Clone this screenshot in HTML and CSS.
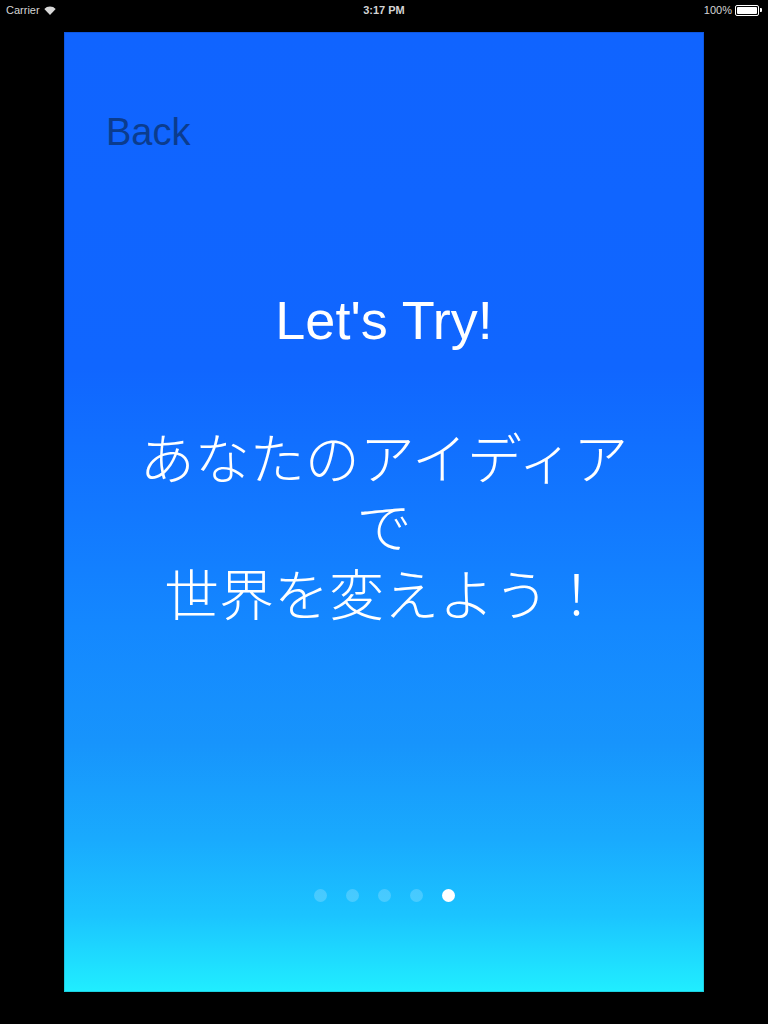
FILE: index.html
```
<!DOCTYPE html>
<html lang="ja">
<head>
<meta charset="utf-8">
<title>Let's Try</title>
<link rel="stylesheet" href="styles.css">
</head>
<body>
<div class="statusbar">
  <div class="sb-left">
    <span>Carrier</span>
    <svg class="wifi" width="12" height="9" viewBox="0 0 12 9">
      <path d="M6 9 L0.3 3 A8 8 0 0 1 11.7 3 Z" fill="#d8d8d8"/>
    </svg>
  </div>
  <div class="sb-center">3:17 PM</div>
  <div class="sb-right">
    <span>100%</span>
    <div class="battery"><div class="battery-fill"></div></div>
    <div class="battery-nub"></div>
  </div>
</div>
<main class="panel">
  <div class="back">Back</div>
  <div class="message">
    <div class="line latin">Let's Try!</div>
    <div class="line blank"></div>
    <div class="line jp">あなたのアイディア</div>
    <div class="line jp">で</div>
    <div class="line jp">世界を変えよう！</div>
  </div>
  <div class="dots">
    <span class="dot"></span>
    <span class="dot"></span>
    <span class="dot"></span>
    <span class="dot"></span>
    <span class="dot active"></span>
  </div>
</main>
</body>
</html>
```

FILE: styles.css
```
* { box-sizing: border-box; }
html, body { margin: 0; padding: 0; }
body {
  background: #000;
  width: 768px;
  height: 1024px;
  overflow: hidden;
  font-family: "Liberation Sans", "Noto Sans CJK JP", sans-serif;
}
.statusbar {
  height: 20px;
  display: flex;
  align-items: center;
  justify-content: space-between;
  padding: 0 6px 0 6px;
  color: #d4d4d4;
  font-size: 11px;
  position: relative;
}
.sb-left { display: flex; align-items: center; gap: 4px; }
.sb-center {
  position: absolute;
  left: 0; right: 0;
  text-align: center;
  font-weight: bold;
  pointer-events: none;
}
.sb-right { display: flex; align-items: center; gap: 3px; }
.battery {
  width: 24px;
  height: 11px;
  border: 1px solid #fff;
  border-radius: 2px;
  padding: 1px;
}
.battery-fill { width: 100%; height: 100%; background: #fff; border-radius: 1px; }
.battery-nub { width: 2px; height: 4px; background: #fff; margin-left: -2px; border-radius: 0 1px 1px 0; }
.panel {
  width: 640px;
  height: 960px;
  margin: 12px auto 0;
  display: flex;
  flex-direction: column;
  background: linear-gradient(to bottom,
    #1064ff 0%,
    #1066ff 35%,
    #1278ff 50%,
    #1488ff 62%,
    #1794fc 74%,
    #19aafe 84%,
    #1bc4ff 92%,
    #20eeff 100%);
  box-shadow: inset 0 0 0 1px rgba(0,0,0,0.12);
}
.back {
  margin: 78px 0 0 42px;
  font-size: 38px;
  line-height: 44px;
  color: #0b3c8e;
}
.message {
  margin-top: 132px;
  color: #fff;
  text-align: center;
}
.line {
  height: 68px;
  line-height: 68px;
  white-space: nowrap;
}
.line.blank { height: 67px; }
.latin { font-size: 54px; }
.jp {
  font-family: "Noto Sans CJK JP", sans-serif;
  font-size: 55px;
  font-weight: 300;
}
.dots {
  margin-top: auto;
  padding-bottom: 90px;
  display: flex;
  justify-content: center;
  gap: 19px;
}
.dot {
  width: 13px;
  height: 13px;
  border-radius: 50%;
  background: rgba(255,255,255,0.2);
}
.dot.active { background: #fff; }
```
